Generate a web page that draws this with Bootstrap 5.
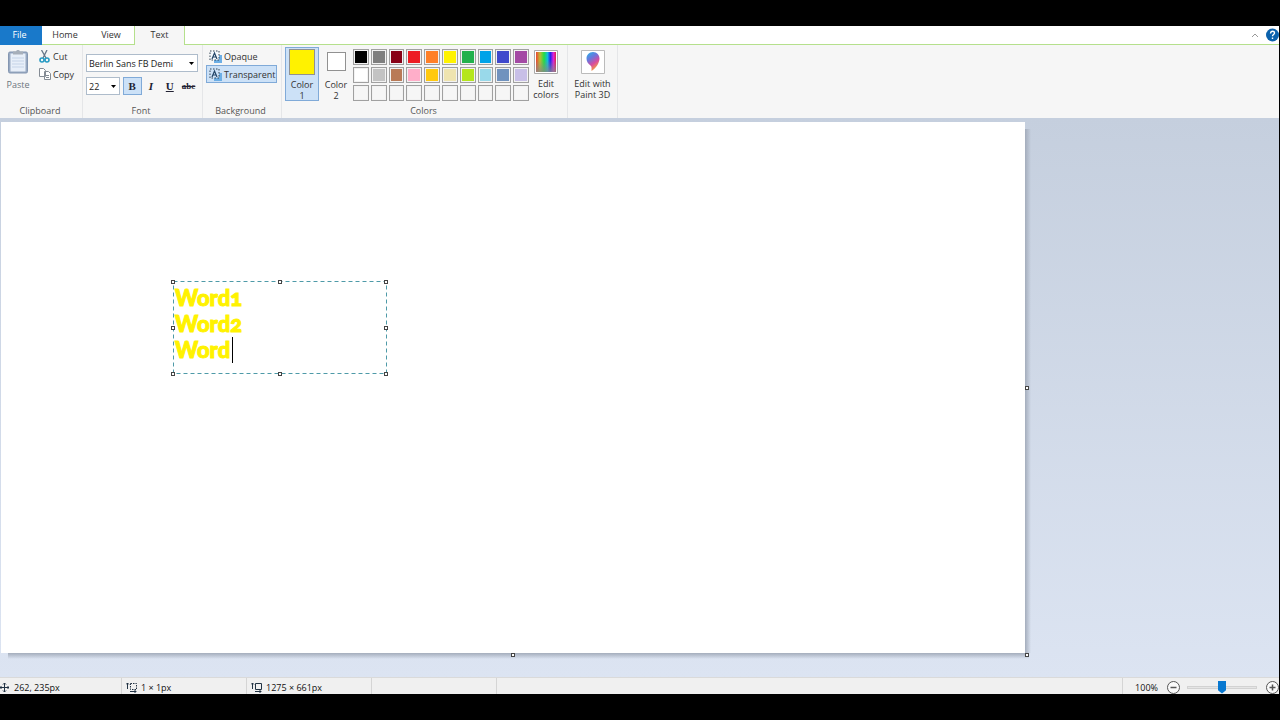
<!DOCTYPE html>
<html lang="en">
<head>
<meta charset="utf-8">
<meta name="viewport" content="width=device-width, initial-scale=1">
<title>Paint</title>
<link href="https://cdn.jsdelivr.net/npm/bootstrap@5.3.0/dist/css/bootstrap.min.css" rel="stylesheet">
<style>
body{background:#000;font:9px/11px "Open Sans","Noto Sans",sans-serif;color:#333}
button,select,input,textarea{font:inherit;color:inherit}
button{background:none;border:1px solid transparent;padding:0}
svg{display:block;flex:none}
.frame{padding:26px 1px 26px 0}
.tabs{height:19px;background:#fff}
.tabs .fill{border-bottom:1px solid #b5e08c}
.tabs a{color:#333;text-decoration:none;line-height:18px;text-align:center;border-bottom:1px solid #b5e08c}
.tabs .file{width:42px;padding-right:3px;background:#1979ca;color:#fff;border-color:#1979ca}
.tabs .plain{width:46px}
.tabs .open{width:51px;background:#f6f6f6;border:1px solid #b5e08c;border-width:0 1px}
.ribbon{background:#f6f6f6;height:73px}
.group{border-right:1px solid #e5e6e8;padding-top:2px;padding-bottom:2px}
.group>.name{text-align:center;color:#555;line-height:11px;padding-right:2px}
.clip{width:83px}.fonts{width:120px;padding-left:3px}.backs{width:79px;padding-left:3px}.colors{width:286px}.colors>div:first-child{padding-left:3px}.three{width:50px}
.fonts,.backs{padding-right:4px}
.row-btn{height:18px;gap:2px;color:#333;padding-left:2px;white-space:nowrap}
.on{background:#cce1f7;border-color:#80aad8}
.combo{appearance:none;border:1px solid #aebccb;border-radius:0;height:18px;padding:0 2px;color:#222;background:#fff url("data:image/svg+xml,%3Csvg xmlns='http://www.w3.org/2000/svg' width='5' height='3'%3E%3Cpath d='M0 0h5L2.500 3z'/%3E%3C/svg%3E") no-repeat right 3px center}
.combo.family{width:112px;margin:7px 0 5px}
.combo.size{width:34px}
.fmt{width:19px;height:18px;font:700 11px/14px "Liberation Serif",serif;color:#223}
.fmt.strike{font-size:9px;text-decoration:line-through}
.big{width:34px;height:54px}
.paste{width:36px}
.chip{display:block;border:1px solid #919191;margin:0 auto}
.chip.one{width:26px;height:26px;margin-top:1px;background:#fff200}
.chip.two{width:19px;height:19px;background:#fff}
.palette{width:176px;display:grid;grid-template-columns:repeat(10,1fr);grid-auto-rows:16px;gap:2px;padding-top:2px}
.palette button{border:1px solid #a0a0a0;box-shadow:inset 0 0 0 1px #f2f2f2}
.work{background:linear-gradient(#c5cfde,#dce4f2);padding:4px 254px 24px 1px}
.sheet{background:#fff;position:relative}
.sheet::before{content:"";position:absolute;left:7px;right:-4px;top:100%;height:6px;background:linear-gradient(#a4adbc,#dce4f200)}
.sheet::after{content:"";position:absolute;left:100%;top:7px;bottom:0;width:6px;background:linear-gradient(90deg,#a4adbc,#dce4f200)}
.grip{position:absolute;width:4px;height:4px;border:1px solid #444;background:#fff;transform:translate(-50%,-50%);z-index:2}
.textframe{position:absolute;left:172px;top:160px;width:213px;height:92px}
.textframe textarea{width:100%;height:100%;border:0;resize:none;overflow:hidden;background:none;padding:3px 2px;font:900 22px/26px Lato,"Open Sans",sans-serif;font-variant-numeric:oldstyle-nums;-webkit-text-stroke:1px #fff200;color:#fff200;outline:0;display:block}
.textframe .ants{position:absolute;inset:0;width:100%;height:100%;pointer-events:none;overflow:visible}
.caret{position:absolute;left:59px;top:55px;width:1px;height:26px;background:#000}
.status{height:17px;background:#f0f0f0;border-top:1px solid #dadada;color:#111;line-height:11px}
.status>div{padding-top:2px}
.cell{width:125px;border-right:1px solid #d5d5d5;gap:4px}
.cell.pos{width:122px;gap:5px}
.zoom{width:157px;border-left:1px solid #d5d5d5;gap:5px}
.zoom button{border:0}
.zoom input{appearance:none;background:none;height:15px;margin:0 4px 0 2px;width:70px}
.zoom input::-webkit-slider-runnable-track{height:3px;background:#e5e5e5;border:1px solid #d2d2d2}
.zoom input::-webkit-slider-thumb{appearance:none;width:8px;height:13px;margin-top:-6px;background:#0878d0;clip-path:polygon(0 0,100% 0,100% 75%,50% 100%,0 75%)}
</style>
</head>
<body>
<div class="frame vh-100 d-flex flex-column overflow-hidden">
  <nav class="tabs d-flex flex-shrink-0" aria-label="Ribbon tabs">
    <a class="file" href="#">File</a><a class="plain" href="#">Home</a><a class="plain" href="#">View</a><a class="open" href="#" aria-current="page">Text</a>
    <div class="fill flex-fill d-flex justify-content-end align-items-center gap-1">
      <button aria-label="Collapse ribbon"><svg width="10" height="6" fill="none" stroke="#999"><path d="M1 5l3-3 3 3"/></svg></button>
      <button aria-label="Help" class="border-0"><svg width="13" height="14" viewBox="0 0 13 14"><circle cx="6.500" cy="7" r="6.500" fill="#0b62ac"/><path d="M4.500 5.500c0-3 4-3 4-.5 0 1.500-2 1.500-2 3.200M6.500 9.500v1.500" fill="none" stroke="#fff" stroke-width="1.400"/></svg></button>
    </div>
  </nav>

  <div class="ribbon d-flex flex-shrink-0">
    <section class="group clip d-flex flex-column justify-content-between">
      <div class="d-flex">
        <button class="big paste text-secondary d-flex flex-column align-items-center">
          <svg width="20" height="27" viewBox="0 0 20 26"><rect x=".5" y="3.500" width="19" height="21" rx="1.500" fill="#98a9c2" stroke="#8496b1"/><path d="M2.500 5h15v18h-15z" fill="#e8eff9"/><path d="M4 9.500h12M4 12.500h12M4 15.500h12M4 18.500h12" stroke="#c5d3e7"/><path d="M5 3h3c0-2 4-2 4 0h3v3H5z" fill="#a7afba"/></svg>
          <span class="pt-1">Paste</span>
        </button>
        <div>
          <button class="row-btn d-flex align-items-center"><svg width="12" height="13" viewBox="0 0 12 13" fill="none"><path d="M2.500 0L7 8M8 0L4 8" stroke="#667789" stroke-width="1.300"/><circle cx="3" cy="10" r="2" stroke="#289bc4" stroke-width="1.600"/><circle cx="8" cy="10" r="2" stroke="#289bc4" stroke-width="1.600"/></svg>Cut</button>
          <button class="row-btn d-flex align-items-center"><svg width="12" height="12" viewBox="0 0 12 12" fill="#fff" stroke="#858c95"><path d="M.5.5h4l2 2v6h-6zM5.500 3.500h4l2 2v6h-6zM7 7.500h3M7 9.500h3"/></svg>Copy</button>
        </div>
      </div>
      <div class="name">Clipboard</div>
    </section>

    <section class="group fonts d-flex flex-column justify-content-between">
      <div>
        <select class="combo family d-block" aria-label="Font family"><option>Berlin Sans FB Demi</option></select>
        <div class="d-flex align-items-center">
          <select class="combo size" aria-label="Font size"><option>22</option></select>
          <button class="fmt on" style="margin-left:3px" aria-label="Bold" aria-pressed="true">B</button><button class="fmt fst-italic" aria-label="Italic">I</button><button class="fmt text-decoration-underline" aria-label="Underline">U</button><button class="fmt strike" aria-label="Strikethrough">abc</button>
        </div>
      </div>
      <div class="name">Font</div>
    </section>

    <section class="group backs d-flex flex-column justify-content-between">
      <div>
        <button class="row-btn d-flex align-items-center"><svg width="13" height="13" viewBox="0 0 13 13"><path d="M5 5h8v8H5z" fill="#6caee5"/><path d="M1 1h9v9H1z" fill="#f5f9fd" stroke="#345" stroke-dasharray="1.500 1.500"/><path d="M3 9l2.500-6L8 9M4 7h3" fill="none" stroke="#246" stroke-width="1.200"/></svg>Opaque</button>
        <button class="row-btn on w-100 d-flex align-items-center" aria-pressed="true"><svg width="13" height="13" viewBox="0 0 13 13"><path d="M10 5h3v8H5v-3h5z" fill="#6caee5"/><path d="M1 1h9v9H1z" fill="none" stroke="#345" stroke-dasharray="1.500 1.500"/><path d="M3 9l2.500-6L8 9M4 7h3" fill="none" stroke="#246" stroke-width="1.200"/></svg><span>Transparent</span></button>
      </div>
      <div class="name">Background</div>
    </section>

    <section class="group colors d-flex flex-column justify-content-between">
      <div class="d-flex">
        <button class="big on"><span class="chip one"></span><span class="d-block pt-1">Color<br>1</span></button>
        <button class="big"><span class="chip two mt-1 mb-2"></span><span class="d-block">Color<br>2</span></button>
        <div class="palette" id="palette"></div>
        <button class="big"><svg class="mx-auto" width="24" height="26" viewBox="0 0 24 26"><defs><linearGradient id="hue"><stop stop-color="#e43"/><stop offset=".2" stop-color="#bb3"/><stop offset=".4" stop-color="#2d4"/><stop offset=".58" stop-color="#1bd"/><stop offset=".72" stop-color="#22e"/><stop offset=".87" stop-color="#d2d"/><stop offset="1" stop-color="#d24"/></linearGradient><linearGradient id="grey" x2="0" y2="1"><stop offset=".4" stop-color="#888" stop-opacity="0"/><stop offset="1" stop-color="#888" stop-opacity=".8"/></linearGradient></defs><path d="M.5 2.500h23v23H.5z" fill="#fff" stroke="#aaa"/><path d="M2 4h20v20H2z" fill="url(#hue)"/><path d="M2 4h20v20H2z" fill="url(#grey)"/></svg><span class="d-block pt-1">Edit<br>colors</span></button>
      </div>
      <div class="name">Colors</div>
    </section>

    <section class="group three">
      <button class="big w-100"><svg class="mx-auto" width="24" height="26" viewBox="0 0 24 26"><defs><linearGradient id="drop" x2=".5" y2="1"><stop stop-color="#24b5e8"/><stop offset=".4" stop-color="#6b76dc"/><stop offset=".7" stop-color="#d84a9e"/><stop offset="1" stop-color="#f5a23c"/></linearGradient></defs><path d="M.5 2.500h23v23H.5z" fill="#fff" stroke="#bbb"/><path d="M12 4c-4 0-6.500 3-6.500 6.500 0 3 1.500 5 4 7 1.500 1 1 3 1 5.500 4-2 8-8 8-12.500C18.500 7 16 4 12 4z" fill="url(#drop)"/></svg><span class="d-block pt-1 text-nowrap">Edit with<br>Paint 3D</span></button>
    </section>
  </div>

  <main class="work flex-fill d-flex">
    <div class="sheet flex-fill">
      <div class="textframe">
        <textarea aria-label="Canvas text" spellcheck="false">Word1
Word2
Word</textarea>
        <svg class="ants"><rect x=".5" y="-.5" width="100%" height="100%" fill="none" stroke="#4e9aa8" stroke-dasharray="4 3"/></svg>
        <span class="caret"></span>
        <i class="grip" style="left:0;top:0"></i><i class="grip" style="left:50%;top:0"></i><i class="grip" style="left:100%;top:0"></i>
        <i class="grip" style="left:0;top:50%"></i><i class="grip" style="left:100%;top:50%"></i>
        <i class="grip" style="left:0;top:100%"></i><i class="grip" style="left:50%;top:100%"></i><i class="grip" style="left:100%;top:100%"></i>
      </div>
      <i class="grip" style="left:calc(100% + 2px);top:50%"></i><i class="grip" style="left:50%;top:calc(100% + 2px)"></i><i class="grip" style="left:calc(100% + 2px);top:calc(100% + 2px)"></i>
    </div>
  </main>

  <footer class="status d-flex flex-shrink-0">
    <div class="cell pos d-flex align-items-center"><svg width="9" height="11" viewBox="0 0 9 11" stroke="#234" fill="none"><path d="M0 5.500h9M4.500 1v9M3 2.500L4.500 1 6 2.500M3 8.500L4.500 10 6 8.500M7.500 4L9 5.500 7.500 7M1.500 4L0 5.500 1.500 7"/></svg>262, 235px</div>
    <div class="cell d-flex align-items-center ps-1"><svg width="11" height="11" viewBox="0 0 11 11" stroke="#234" fill="none"><path d="M1.500 1v6M0 2.500L1.500 1 3 2.500M4 9.500h6M8.500 8L10 9.500 8.500 11"/><path d="M4.500 1.500h6v6h-6z" stroke-dasharray="1.500 1"/></svg>1 × 1px</div>
    <div class="cell d-flex align-items-center ps-1"><svg width="11" height="11" viewBox="0 0 11 11" stroke="#234" fill="none"><path d="M1.500 1v6M0 2.500L1.500 1 3 2.500M4 9.500h6M8.500 8L10 9.500 8.500 11M4.500 1.500h6v6h-6z"/></svg>1275 × 661px</div>
    <div class="cell"></div>
    <div class="zoom ms-auto d-flex align-items-center justify-content-end">
      <span class="me-1">100%</span>
      <button aria-label="Zoom out"><svg width="13" height="13" viewBox="0 0 13 13" fill="#fafafa" stroke="#555"><circle cx="6.500" cy="6.500" r="6"/><path d="M3.500 6.500h6" stroke-width="1.500"/></svg></button>
      <input type="range" aria-label="Zoom" min="0" max="100" value="50">
      <button aria-label="Zoom in"><svg width="13" height="13" viewBox="0 0 13 13" fill="#fafafa" stroke="#555"><circle cx="6.500" cy="6.500" r="6"/><path d="M3.500 6.500h6M6.500 3.500v6" stroke-width="1.500"/></svg></button>
    </div>
  </footer>
</div>
<script src="https://cdn.jsdelivr.net/npm/bootstrap@5.3.0/dist/js/bootstrap.bundle.min.js"></script>
<script>
const swatches = ["#000","#7f7f7f","#880015","#ed1c24","#ff7f27","#fff200","#22b14c","#00a2e8","#3f48cc","#a349a4",
"#fff","#c3c3c3","#b97a57","#ffaec9","#ffc90e","#efe4b0","#b5e61d","#99d9ea","#7092be","#c8bfe7",
...Array(10).fill("#f6f6f6")];
swatches.forEach((color, i) => {
  const b = document.createElement("button");
  b.style.backgroundColor = color;
  b.setAttribute("aria-label", i < 20 ? "Color " + color : "Empty color");
  document.getElementById("palette").append(b);
});
</script>
</body>
</html>
